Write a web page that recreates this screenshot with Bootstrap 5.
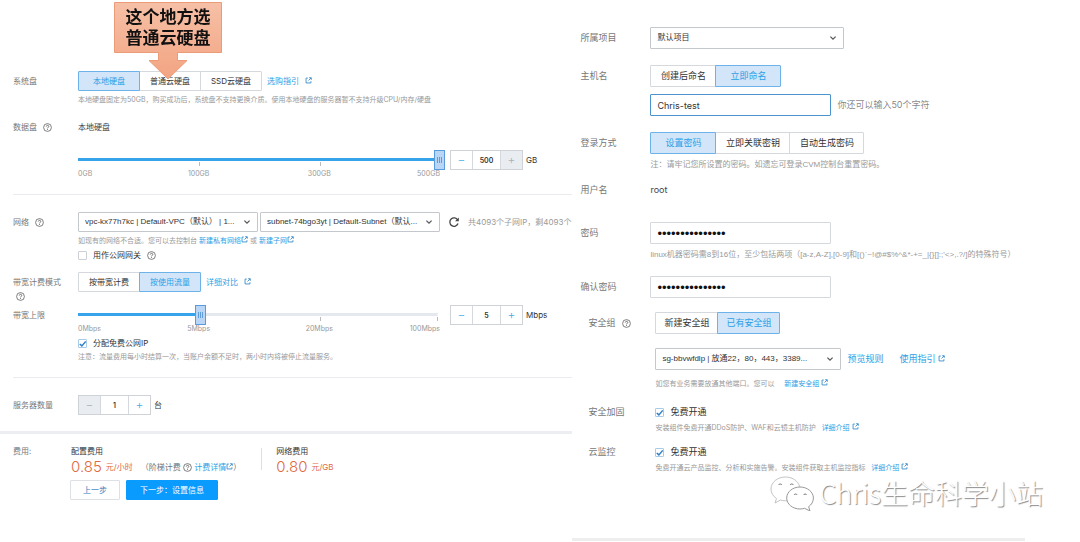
<!DOCTYPE html>
<html lang="zh-CN">
<head>
<meta charset="utf-8">
<meta name="viewport" content="width=device-width, initial-scale=1">
<title>云服务器购买配置</title>
<link href="https://cdn.jsdelivr.net/npm/bootstrap@5.3.0/dist/css/bootstrap.min.css" rel="stylesheet">
<style>
  :root {
    --line: #d5d8dc;
    --blue: #2b9fe6;
    --ctl: 20px;
    --fs: 8px;
    --note: 7px;
  }
  body {
    font-family: Inter, "Noto Sans CJK SC", sans-serif;
    font-size: var(--fs);
    line-height: 14px;
    color: #444;
    background: #fff;
  }
  a { color: var(--blue); text-decoration: none; }
  .pane-left { width: 53%; }
  .pane-right { width: 47%; --ctl: 22px; --fs: 9px; font-size: var(--fs); }
  .inset { padding-left: 13px; }
  .pane-left .inset { padding-top: 71px; }
  .pane-right .inset { padding: 27px 0 0 8px; }

  /* form rows: fixed caption column, fluid content */
  .frow { display: flex; align-items: flex-start; }
  .cap { flex: 0 0 65px; color: #777; padding-top: 3px; }
  .pane-right .cap { flex-basis: 70px; padding-top: 4px; }
  .pane-right .sub .cap { flex-basis: 67px; }
  .pane-right .sub { padding-left: 8px; }
  .pane-right .tick .cap { padding-top: 0; }
  .cnt { flex: 1 1 0; min-width: 0; }
  .line { display: flex; align-items: center; white-space: nowrap; min-height: var(--ctl); }
  .note { font-size: var(--note); color: #999; white-space: nowrap; }
  .pane-right .note-lg { font-size: 8px; font-family: "Liberation Sans", "Noto Sans CJK SC", sans-serif; }
  .s1 { margin-top: 2px; } .s2 { margin-top: 4px; } .s3 { margin-top: 7px; }
  .m { margin-top: 10px; } .l { margin-top: 13px; } .xl { margin-top: 16px; } .xxl { margin-top: 21px; }
  .pane-right .l { margin-top: 14px; }
  .rule { height: 1px; background: #e9ebee; }
  .rule + .frow { margin-top: 17px; }
  .bar3 { height: 3px; background: #eceef2; }

  .seg .btn {
    --bs-btn-font-size: var(--fs);
    --bs-btn-line-height: 14px;
    --bs-btn-border-radius: 1px;
    --bs-btn-color: #333;
    --bs-btn-border-color: var(--line);
    --bs-btn-active-color: #2b9fe6;
    --bs-btn-active-bg: #d3e5f9;
    --bs-btn-active-border-color: #6db3ea;
    width: 62px; height: var(--ctl);
    padding: 0; line-height: calc(var(--ctl) - 2px);
  }
  .pane-right .seg .btn { width: 66px; }
  .pane-right .seg .btn-wide { width: 75px; }
  .pane-right .seg .btn-mid { width: 63px; }

  .form-select, .form-control {
    font-size: var(--fs); line-height: 14px; height: var(--ctl); min-height: 0;
    padding: 0 16px 0 6px; border: 1px solid var(--line); border-radius: 1px; color: #333;
  }
  .form-select {
    font-family: "Liberation Sans", "Noto Sans CJK SC", sans-serif;
    background-image: url("data:image/svg+xml,%3Csvg xmlns='http://www.w3.org/2000/svg' viewBox='0 0 8 8'%3E%3Cpath d='M1.4 2.6 4 5.2l2.6-2.6' fill='none' stroke='%23555' stroke-width='1.2'/%3E%3C/svg%3E");
    background-size: 8px 8px; background-position: right 6px center; border-color: #c4c8cc;
  }
  .w-net { width: 180px; flex: 0 1 180px; }
  .w-proj { width: 194px; --fs: 8px; }
  .w-sg { width: 186px; --fs: 8px; }
  .w-in { width: 181px; }
  .named { border-color: #4d94cf; }
  .pwd { font-family: "Liberation Sans", sans-serif; font-size: 13px; color: #111; }

  .form-check { display: flex; align-items: center; padding: 0; margin: 0; min-height: 14px; }
  .form-check.gap-up { margin-top: 3px; }
  .form-check .form-check-input {
    float: none; width: 9px; height: 9px; margin: 0 6px 0 0; border: 1px solid #ccd0d4; border-radius: 1px;
  }
  .form-check .form-check-input:checked {
    background-color: #fff; border-color: #a9cbe8; background-size: 8px 8px;
    background-image: url("data:image/svg+xml,%3Csvg xmlns='http://www.w3.org/2000/svg' viewBox='0 0 8 8'%3E%3Cpath d='M1.2 4.2 3.2 6 6.8 1.8' fill='none' stroke='%232f7fc8' stroke-width='1.4'/%3E%3C/svg%3E");
  }
  .form-check-label { color: #333; }

  /* slider */
  .slider { flex: 0 1 367px; min-width: 0; }
  .slider input {
    -webkit-appearance: none; appearance: none; display: block; width: 100%; height: 20px; margin: 0;
    background:
      linear-gradient(90deg, #36a3ea var(--fill), transparent 0) 0 8px / 100% 3px no-repeat,
      linear-gradient(#e6e8ef, #e6e8ef) 0 8px / 98% 3px no-repeat,
      linear-gradient(#bbb, #bbb) 33% 12px / 1px 4px no-repeat,
      linear-gradient(#bbb, #bbb) 66% 12px / 1px 4px no-repeat,
      linear-gradient(#bbb, #bbb) 98% 12px / 1px 4px no-repeat;
  }
  .slider input::-webkit-slider-thumb {
    -webkit-appearance: none; width: 11px; height: 20px; border: 1px solid #5a9bdb;
    background:
      linear-gradient(#5f9cd8, #5f9cd8) 2px 6px / 1px 6px no-repeat,
      linear-gradient(#5f9cd8, #5f9cd8) 4px 6px / 1px 6px no-repeat,
      linear-gradient(#5f9cd8, #5f9cd8) 6px 6px / 1px 6px no-repeat,
      #b9d6f7;
  }
  .scale { display: grid; grid-template-columns: 1fr 2fr 2fr 1fr; width: 362px; max-width: 100%; font-size: 7px; line-height: 8px; color: #999; text-align: center; }
  .scale span:first-child { text-align: left; }
  .scale span:last-child { text-align: right; }

  /* number stepper */
  .stepper { display: flex; width: 73px; height: 20px; border: 1px solid #cfd3d8; flex: none; }
  .slider + .stepper { margin-left: 5px; }
  .stepper button { flex: 0 0 21px; border: 0; padding: 0; background: #fff; color: #45aee8; font-size: 12px; line-height: 16px; font-weight: 300; }
  .stepper button:disabled { background: #e9edf1; color: #aab0b6; }
  .stepper .form-control { flex: 1 1 0; min-width: 0; height: 18px; padding: 0; text-align: center; border-width: 0 1px; border-radius: 0; font-weight: 600; font-size: 7px; }
  .stepper + label { margin-left: 3px; color: #333; }

  /* pointer note over the disk type choice */
  .callout { left: 36px; top: -69px; width: 108px; z-index: 3; pointer-events: none; text-align: center; }
  .callout svg { display: block; position: absolute; left: 0; top: 0; }
  .callout p { position: relative; margin: 0; padding-top: 5px; font-size: 17px; line-height: 21px; font-weight: 600; color: #111; }
  .tip { mix-blend-mode: multiply; }

  .ic { flex: none; display: inline-block; }
  .ext { width: 7px; height: 7px; color: #2e86c8; vertical-align: 0; }
  .q { width: 9px; height: 9px; color: #555; vertical-align: -2px; }

  .price { font-size: 15px; line-height: 18px; font-weight: 300; color: #e0693f; }
  .price small { font-size: 8px; font-weight: 400; margin-left: 4px; }
  .fee-title { color: #333; }
  .vline { width: 1px; height: 22px; background: #dcdfe3; margin: 4px 14px 0 20px; }
  .act { --bs-btn-font-size: 8px; --bs-btn-border-radius: 1px; height: 20px; padding: 0; line-height: 18px; }
  .act-prev { width: 50px; color: #2e7cc0; border-color: #dde0e4; background: #fff; }
  .act-next { width: 92px; color: #fff; background: #0a9bff; border-color: #0a9bff; }

  .sign { padding-left: 190px; gap: 5px; height: 36px; font-family: "Noto Sans CJK SC", sans-serif; font-size: 27px; line-height: 36px; font-weight: 300; color: #fff; text-shadow: 1px 1px 1px #888; white-space: nowrap; }
  .foot { width: 453px; max-width: 100%; margin-top: 27px; background: #eee; }
</style>
</head>
<body>
<svg class="d-none" aria-hidden="true">
  <symbol id="ext" viewBox="0 0 10 10"><path d="M4 1.5H1.5v7h7V6M5 5l3.6-3.6M6 1h3v3" fill="none" stroke="currentColor" stroke-width="1.2"/></symbol>
  <symbol id="q" viewBox="0 0 12 12"><circle cx="6" cy="6" r="5.2" fill="none" stroke="currentColor" stroke-width="1"/><path d="M4.3 4.8c0-2.2 3.4-2.2 3.4-.2C7.700 5.900 6 5.800 6 7.200M6 8.200v1.100" fill="none" stroke="currentColor" stroke-width="1.100"/></symbol>
</svg>

<main class="d-flex">
  <form class="pane-left overflow-hidden">
    <div class="inset">
      <div class="frow">
        <div class="cap">系统盘</div>
        <div class="cnt">
          <div class="line position-relative">
            <div class="btn-group seg" role="group" aria-label="系统盘">
              <input class="btn-check" type="radio" name="disk" id="d1" checked><label class="btn" for="d1">本地硬盘</label>
              <input class="btn-check" type="radio" name="disk" id="d2"><label class="btn" for="d2">普通云硬盘</label>
              <input class="btn-check" type="radio" name="disk" id="d3"><label class="btn" for="d3">SSD云硬盘</label>
            </div>
            <a href="#" style="margin-left:5px">选购指引 <svg class="ic ext ms-1"><use href="#ext"/></svg></a>
            <div class="callout position-absolute">
              <svg class="tip" width="108" height="78" viewBox="0 0 108 78">
                <defs><linearGradient id="cg" x1="0" y1="0" x2="0" y2="1"><stop offset="0" stop-color="#f6c0a6"/><stop offset="1" stop-color="#f2a482"/></linearGradient></defs>
                <path d="M.5.5h107v50H63.500v8H73L54 77 35 58.500h9.500v-8H.5z" fill="url(#cg)" stroke="#eb9b78"/>
              </svg>
              <p>这个地方选<br>普通云硬盘</p>
            </div>
          </div>
          <div class="note s1">本地硬盘固定为50GB，购买成功后，系统盘不支持更换介质。使用本地硬盘的服务器暂不支持升级CPU/内存/硬盘</div>
        </div>
      </div>

      <div class="frow m">
        <div class="cap">数据盘 <svg class="ic q ms-1"><use href="#q"/></svg></div>
        <div class="cnt">
          <div class="line">本地硬盘</div>
          <div class="line l">
            <div class="slider"><input type="range" min="0" max="500" value="500" aria-label="数据盘容量" style="--fill:98%"></div>
            <div class="stepper"><button type="button" aria-label="减少">−</button><input class="form-control" id="gb" type="text" value="500"><button type="button" aria-label="增加" disabled>+</button></div>
            <label for="gb">GB</label>
          </div>
          <div class="scale"><span>0GB</span><span>100GB</span><span>300GB</span><span>500GB</span></div>
        </div>
      </div>

      <div class="rule xl"></div>

      <div class="frow">
        <div class="cap">网络 <svg class="ic q ms-1"><use href="#q"/></svg></div>
        <div class="cnt">
          <div class="line overflow-hidden">
            <select class="form-select w-net" aria-label="私有网络"><option>vpc-kx77h7kc | Default-VPC（默认） | 1...</option></select>
            <select class="form-select w-net" style="margin-left:2px" aria-label="子网"><option>subnet-74bgo3yt | Default-Subnet（默认...</option></select>
            <svg class="ic mx-2" width="12" height="12" viewBox="0 0 12 12" aria-hidden="true"><path d="M9.700 4A4.200 4.200 0 1 0 10 7.500" fill="none" stroke="#444" stroke-width="1.300"/><path d="M10.800 1.500v3.700H7.100z" fill="#444"/></svg>
            <span style="color:#999">共4093个子网IP，剩4093个</span>
          </div>
          <div class="note s1">如现有的网络不合适。您可以去控制台 <a href="#">新建私有网络<svg class="ic ext"><use href="#ext"/></svg></a> 或 <a href="#">新建子网<svg class="ic ext"><use href="#ext"/></svg></a></div>
          <div class="form-check">
            <input class="form-check-input" type="checkbox" id="gw"><label class="form-check-label" for="gw">用作公网网关</label>
            <svg class="ic q" style="margin-left:6px"><use href="#q"/></svg>
          </div>
        </div>
      </div>

      <div class="frow m">
        <div class="cap">带宽计费模式<br><svg class="ic q" style="margin-left:3px"><use href="#q"/></svg></div>
        <div class="cnt">
          <div class="line">
            <div class="btn-group seg" role="group" aria-label="带宽计费模式">
              <input class="btn-check" type="radio" name="bw" id="b1"><label class="btn" for="b1">按带宽计费</label>
              <input class="btn-check" type="radio" name="bw" id="b2" checked><label class="btn" for="b2">按使用流量</label>
            </div>
            <a href="#" style="margin-left:5px">详细对比 <svg class="ic ext ms-1"><use href="#ext"/></svg></a>
          </div>
        </div>
      </div>

      <div class="frow s1">
        <div class="cap">带宽上限</div>
        <div class="cnt">
          <div class="line">
            <div class="slider"><input type="range" min="0" max="100" value="33" aria-label="带宽上限" aria-valuetext="5Mbps" style="--fill:33%"></div>
            <div class="stepper"><button type="button" aria-label="减少">−</button><input class="form-control" id="mb" type="text" value="5"><button type="button" aria-label="增加">+</button></div>
            <label for="mb">Mbps</label>
          </div>
          <div class="scale"><span>0Mbps</span><span>5Mbps</span><span>20Mbps</span><span>100Mbps</span></div>
          <div class="form-check gap-up">
            <input class="form-check-input" type="checkbox" id="ip" checked><label class="form-check-label" for="ip">分配免费公网IP</label>
          </div>
          <div class="note">注意：流量费用每小时结算一次，当账户余额不足时，两小时内将被停止流量服务。</div>
        </div>
      </div>

      <div class="rule l"></div>

      <div class="frow">
        <div class="cap">服务器数量</div>
        <div class="cnt">
          <div class="line">
            <div class="stepper"><button type="button" aria-label="减少" disabled>−</button><input class="form-control" id="num" type="text" value="1"><button type="button" aria-label="增加">+</button></div>
            <label for="num">台</label>
          </div>
        </div>
      </div>
    </div>

    <div class="bar3 xl"></div>

    <div class="frow m" style="padding-left:13px">
      <div class="cap" style="flex-basis:57px;padding-top:0">费用:</div>
      <div class="cnt">
        <div class="d-flex text-nowrap">
          <div style="margin-left:1px">
            <div class="fee-title">配置费用</div>
            <div class="price d-flex align-items-center">0.85 <small>元/小时</small>
              <small class="text-secondary ms-2">（阶梯计费 <svg class="ic q"><use href="#q"/></svg> <a href="#">计费详情<svg class="ic ext"><use href="#ext"/></svg></a>）</small></div>
          </div>
          <div class="vline"></div>
          <div>
            <div class="fee-title">网络费用</div>
            <div class="price d-flex align-items-center">0.80 <small>元/GB</small></div>
          </div>
        </div>
        <div class="d-flex s2">
          <button type="button" class="btn act act-prev">上一步</button>
          <button type="submit" class="btn act act-next" style="margin-left:6px">下一步：设置信息</button>
        </div>
      </div>
    </div>
  </form>

  <form class="pane-right overflow-hidden">
    <div class="inset">
      <div class="frow">
        <label class="cap" for="proj">所属项目</label>
        <div class="cnt"><select class="form-select w-proj" id="proj"><option>默认项目</option></select></div>
      </div>
      <div class="frow xl">
        <label class="cap" for="host">主机名</label>
        <div class="cnt">
          <div class="btn-group seg" role="group" aria-label="主机名方式">
            <input class="btn-check" type="radio" name="hn" id="h1"><label class="btn" for="h1">创建后命名</label>
            <input class="btn-check" type="radio" name="hn" id="h2" checked><label class="btn" for="h2">立即命名</label>
          </div>
          <div class="line s3"><input class="form-control w-in named" id="host" type="text" value="Chris-test"><span class="text-black-50" style="margin-left:6px">你还可以输入50个字符</span></div>
        </div>
      </div>
      <div class="frow xl">
        <div class="cap">登录方式</div>
        <div class="cnt">
          <div class="btn-group seg" role="group" aria-label="登录方式">
            <input class="btn-check" type="radio" name="lg" id="l1" checked><label class="btn" for="l1">设置密码</label>
            <input class="btn-check" type="radio" name="lg" id="l2"><label class="btn btn-wide" for="l2">立即关联密钥</label>
            <input class="btn-check" type="radio" name="lg" id="l3"><label class="btn btn-wide" for="l3">自动生成密码</label>
          </div>
          <div class="note note-lg s2">注：请牢记您所设置的密码。如遗忘可登录CVM控制台重置密码。</div>
        </div>
      </div>
      <div class="frow s3">
        <div class="cap">用户名</div>
        <div class="cnt"><div class="line">root</div></div>
      </div>
      <div class="frow xxl">
        <label class="cap" for="p1">密码</label>
        <div class="cnt">
          <input class="form-control w-in pwd" id="p1" type="password" value="abcdefgh1234567">
          <div class="note note-lg s2">linux机器密码需8到16位，至少包括两项（[a-z,A-Z],[0-9]和[()`~!@#$%^&amp;*-+=_|{}[]:;'&lt;&gt;,.?/]的特殊符号）</div>
        </div>
      </div>
      <div class="frow l">
        <label class="cap" for="p2">确认密码</label>
        <div class="cnt"><input class="form-control w-in pwd" id="p2" type="password" value="abcdefgh1234567"></div>
      </div>

      <div class="frow sub l">
        <div class="cap">安全组 <svg class="ic q ms-1"><use href="#q"/></svg></div>
        <div class="cnt">
          <div class="btn-group seg" role="group" aria-label="安全组">
            <input class="btn-check" type="radio" name="sg" id="s1"><label class="btn btn-mid" for="s1">新建安全组</label>
            <input class="btn-check" type="radio" name="sg" id="s2" checked><label class="btn btn-mid" for="s2">已有安全组</label>
          </div>
          <div class="line l">
            <select class="form-select w-sg" aria-label="已有安全组"><option>sg-bbvwfdlp | 放通22，80，443，3389...</option></select>
            <a href="#" style="margin-left:6px">预览规则</a>
            <a href="#" class="ms-3">使用指引 <svg class="ic ext"><use href="#ext"/></svg></a>
          </div>
          <div class="note s3">如您有业务需要放通其他端口。您可以 <a href="#" class="ms-2">新建安全组 <svg class="ic ext"><use href="#ext"/></svg></a></div>
        </div>
      </div>
      <div class="frow sub tick l">
        <div class="cap">安全加固</div>
        <div class="cnt">
          <div class="form-check"><input class="form-check-input" type="checkbox" id="c1" checked><label class="form-check-label" for="c1">免费开通</label></div>
          <div class="note s1">安装组件免费开通DDoS防护、WAF和云镜主机防护 <a href="#" class="ms-1">详细介绍 <svg class="ic ext"><use href="#ext"/></svg></a></div>
        </div>
      </div>
      <div class="frow sub tick m">
        <div class="cap">云监控</div>
        <div class="cnt">
          <div class="form-check"><input class="form-check-input" type="checkbox" id="c2" checked><label class="form-check-label" for="c2">免费开通</label></div>
          <div class="note s1">免费开通云产品监控、分析和实施告警。安装组件获取主机监控指标 <a href="#" class="ms-1">详细介绍 <svg class="ic ext"><use href="#ext"/></svg></a></div>
        </div>
      </div>
      <div class="sign d-flex align-items-center">
        <svg class="ic" width="44" height="36" viewBox="0 0 44 36" aria-hidden="true">
          <g fill="#fff" stroke="#999" stroke-width="1">
            <path d="M15.500 2C7.500 2 1 7.300 1 14c0 4 2 7.200 5.500 9.500L5 28l5.500-3c1.500.5 3 .8 5 .8C23.500 25.800 30 20.500 30 14S23.500 2 15.500 2z" stroke="#c4c4c4"/>
            <path d="M30 12c-7.500 0-13.300 5-13.300 11S22.500 34 30 34c1.500 0 3-.2 4.500-.7L40 36l-1.400-4.300C41.500 29.700 43.400 26.700 43.400 23c0-6-6-11-13.400-11z"/>
          </g>
          <g fill="none" stroke="#777" stroke-width="1">
            <path d="M8.500 10a2 2 0 0 1 3.500 0M20 10a2 2 0 0 1 3.500 0M24 20a1.800 1.800 0 0 1 3.200 0M33.500 20a1.800 1.800 0 0 1 3.200 0"/>
          </g>
        </svg>
        <span>Chris生命科学小站</span>
      </div>
    </div>
    <div class="bar3 foot"></div>
  </form>
</main>
<script src="https://cdn.jsdelivr.net/npm/bootstrap@5.3.0/dist/js/bootstrap.bundle.min.js"></script>
</body>
</html>
